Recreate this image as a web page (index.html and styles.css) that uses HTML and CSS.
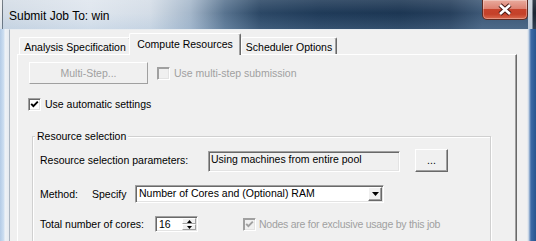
FILE: index.html
```html
<!DOCTYPE html>
<html>
<head>
<title>Submit Job To: win</title>
<meta charset='utf-8'/>
<link rel="stylesheet" href="styles.css">
</head>
<body>
<div class='window'>
	<div class='titlebar'>
		<span class='title'>Submit Job To: win</span>
		<a class='close' href='#'>
			<svg width="16" height="13" viewBox="0 0 16 13">
				<path d="M3 2 L13 11 M13 2 L3 11" stroke="#4a1a14" stroke-width="4.6"/>
				<path d="M3 2 L13 11 M13 2 L3 11" stroke="#fff" stroke-width="2.6"/>
			</svg>
		</a>
	</div>
	<div class='frame'>
		<div class='edge-left'></div>
		<div class='client'>
			<div class='tabs'>
				<div class='tab tab-analysis'>Analysis Specification</div>
				<div class='tab tab-compute active'>Compute Resources</div>
				<div class='tab tab-scheduler'>Scheduler Options</div>
			</div>
			<div class='panel'>
				<div class='multi'>
					<a class='btn disabled multi-step' href='#'>Multi-Step...</a>
					<label class='check disabled'><span class='box'></span>Use multi-step submission</label>
				</div>
				<label class='check auto'>
					<span class='box'><svg width="9" height="9" viewBox="0 0 9 9"><path d="M1.2 3.8 L3.4 6.2 L7.8 1.6" stroke="#000" stroke-width="1.9" fill="none"/></svg></span>
					Use automatic settings
				</label>
				<fieldset class='group'>
					<legend>Resource selection</legend>
					<div class='row params'>
						<span class='label'>Resource selection parameters:</span>
						<div class='field'>Using machines from entire pool</div>
						<a class='btn dots' href='#'>...</a>
					</div>
					<div class='row method'>
						<span class='m-label'>Method:</span>
						<span class='m-spec'>Specify</span>
						<div class='combo'>
							<span class='combo-text'>Number of Cores and (Optional) RAM</span>
							<span class='drop'><svg width="7" height="4" viewBox="0 0 7 4"><path d="M0 0 H7 L3.5 4 Z" fill="#000"/></svg></span>
						</div>
					</div>
					<div class='row cores'>
						<span class='label'>Total number of cores:</span>
						<div class='spin'>
							<span class='spin-val'>16</span>
							<span class='spin-btns'>
								<span class='spin-btn'><svg width="5" height="3" viewBox="0 0 5 3"><path d="M0 3 H5 L2.5 0 Z" fill="#000"/></svg></span>
								<span class='spin-btn'><svg width="5" height="3" viewBox="0 0 5 3"><path d="M0 0 H5 L2.5 3 Z" fill="#000"/></svg></span>
							</span>
						</div>
						<label class='check disabled exclusive'>
							<span class='box'><svg width="9" height="9" viewBox="0 0 9 9"><path d="M1.2 3.8 L3.4 6.2 L7.8 1.6" stroke="#a0a0a0" stroke-width="1.9" fill="none"/></svg></span>
							Nodes are for exclusive usage by this job
						</label>
					</div>
				</fieldset>
			</div>
		</div>
		<div class='edge-right'></div>
	</div>
</div>
</body>
</html>
```

FILE: styles.css
```css
* {
	box-sizing: border-box;
}
body {
	margin: 0;
	background: #f0f0f0;
	color: #000;
	font-family: "Liberation Sans", Arial, sans-serif;
	font-size: 10.5px;
	line-height: 13px;
}
a {
	color: inherit;
	text-decoration: none;
}
.window {
	width: 536px;
	height: 241px;
	overflow: hidden;
	display: flex;
	flex-direction: column;
}
/* title bar */
.titlebar {
	height: 29px;
	flex: none;
	display: flex;
	align-items: flex-start;
	padding-left: 9px;
	background:
		linear-gradient(to bottom, rgba(255,255,255,0.12), rgba(255,255,255,0) 45%, rgba(140,175,210,0.2)),
		linear-gradient(to right, #eceef0 0, #eceef0 2px, #66707a 2px, #66707a 3px, #d3dce6 3px, #dfe6ee 90px, #d4dde7 150px, #a6b8cb 190px, #58738f 225px, #2b4765 260px, #1f3a58 320px, #1c3653 400px, #263f5c 450px, #3d5876 482px, #3d5876 528px, #c9d2dc 528px, #c9d2dc 532px, #1a2533 533px);
}
.title {
	font-size: 12px;
	line-height: 14px;
	padding-top: 9px;
}
.close {
	margin-left: auto;
	margin-right: 8px;
	width: 46px;
	height: 20px;
	display: flex;
	align-items: center;
	justify-content: center;
	border: 1px solid #5e2a22;
	border-top: 0;
	border-radius: 0 0 5px 5px;
	background: linear-gradient(to bottom, #e9ab9d 0, #dd8272 45%, #c7432c 50%, #c4412a 75%, #da6a4e 100%);
	box-shadow: inset 0 0 0 1px rgba(255,255,255,0.3);
}
/* frame */
.frame {
	flex: 1;
	display: flex;
}
.edge-left {
	width: 9px;
	background: linear-gradient(to right, #b3cbe6 0, #cfe0f2 4px, #eef2f6 5px, #e6ebf1 9px);
}
.edge-right {
	width: 9px;
	background: linear-gradient(to right, #e4e9ef 0, #e4e9ef 1px, #a9c0db 2px, #3d6aa6 4px, #27558f 9px);
}
.client {
	flex: 1;
	background: #f0f0f0;
	border-left: 1px solid #aab5c1;
	border-top: 1px solid #e8ecf0;
	padding: 3px 0 0 7px;
}
/* tabs */
.tabs {
	display: flex;
	align-items: flex-end;
	height: 21px;
	padding-left: 2px;
}
.tab {
	height: 17px;
	padding-top: 3px;
	text-align: center;
	white-space: nowrap;
	background: #f0f0f0;
	border: 1px solid #fff;
	border-right-color: #696969;
	border-bottom: 0;
	border-radius: 2px 2px 0 0;
	box-shadow: inset -1px 0 #a0a0a0;
}
.tab-analysis {
	width: 112px;
}
.tab-compute {
	width: 112px;
}
.tab-scheduler {
	width: 96px;
}
.tab.active {
	height: 22px;
	padding-top: 4px;
	margin: 0 0 -1px -2px;
	position: relative;
	z-index: 1;
}
.panel {
	width: 500px;
	height: 220px;
	border-top: 1px solid #fff;
	border-left: 1px solid #fff;
	border-right: 1px solid #696969;
	box-shadow: inset -1px 0 #a0a0a0;
	padding: 7px 0 0 11px;
}
/* controls */
.btn {
	display: flex;
	align-items: center;
	justify-content: center;
	border: 1px solid;
	border-color: #fff #696969 #696969 #fff;
	box-shadow: inset -1px -1px #a0a0a0;
	background: #f0f0f0;
}
.btn.disabled {
	color: #a0a0a0;
	border-color: #fff #a0a0a0 #a0a0a0 #fff;
	box-shadow: none;
}
.multi {
	display: flex;
	align-items: center;
	height: 22px;
}
.multi-step {
	width: 119px;
	height: 22px;
}
.multi .check {
	margin-left: 9px;
}
.check {
	display: flex;
	align-items: center;
	gap: 4px;
	white-space: nowrap;
}
.check.disabled {
	color: #a0a0a0;
}
.box {
	width: 13px;
	height: 13px;
	flex: none;
	display: flex;
	align-items: center;
	justify-content: center;
	border: 1px solid;
	border-color: #a0a0a0 #fff #fff #a0a0a0;
	box-shadow: inset 1px 1px #696969, inset -1px -1px #e3e3e3;
	background: #fff;
}
.check.disabled .box {
	background: #f0f0f0;
	box-shadow: inset 1px 1px #a0a0a0, inset -1px -1px #e3e3e3;
}
.auto {
	margin: 14px 0 0 -1px;
	height: 13px;
}
/* group box */
.group {
	margin: 19px 0 0 3px;
	width: 459px;
	min-width: 0;
	padding: 6px 0 30px 7px;
	border: 1px solid #d0d0d0;
	box-shadow: inset 1px 1px #fff, 1px 1px #fff;
}
.group legend {
	padding: 0 2px;
	margin-left: -5px;
	line-height: 13px;
	background: #f0f0f0;
}
.row {
	display: flex;
	align-items: center;
	white-space: nowrap;
}
.params {
	height: 23px;
}
.params .label {
	width: 168px;
}
.field {
	width: 192px;
	height: 21px;
	align-self: flex-end;
	border: 1px solid;
	border-color: #a0a0a0 #fff #fff #a0a0a0;
	box-shadow: inset 1px 1px #696969, inset -1px -1px #e3e3e3;
	background: #f0f0f0;
	padding: 1px 2px 0;
}
.dots {
	width: 33px;
	height: 23px;
	margin-left: 15px;
}
.method {
	height: 18px;
	margin-top: 13px;
}
.m-label {
	width: 52px;
}
.m-spec {
	width: 43px;
}
.combo,
.spin {
	display: flex;
	border: 1px solid;
	border-color: #a0a0a0 #fff #fff #a0a0a0;
	box-shadow: inset 1px 1px #696969, inset -1px -1px #e3e3e3;
	background: #fff;
	padding: 1px;
}
.combo {
	width: 249px;
	height: 18px;
}
.combo-text {
	flex: 1;
	padding-left: 2px;
	line-height: 12px;
}
.drop {
	width: 14px;
	height: 14px;
	display: flex;
	align-items: center;
	justify-content: center;
	background: #f0f0f0;
	border: 1px solid;
	border-color: #fff #696969 #696969 #fff;
	box-shadow: inset -1px -1px #a0a0a0;
}
.cores {
	height: 16px;
	margin-top: 13px;
}
.cores .label {
	width: 115px;
}
.spin {
	width: 43px;
	height: 16px;
}
.spin-val {
	flex: 1;
	padding-left: 2px;
	line-height: 12px;
}
.spin-btns {
	width: 14px;
	display: flex;
	flex-direction: column;
}
.spin-btn {
	flex: 1;
	display: flex;
	align-items: center;
	justify-content: center;
	background: #f0f0f0;
	border: 1px solid;
	border-color: #fff #a0a0a0 #a0a0a0 #fff;
}
.cores .check {
	margin-left: 45px;
	gap: 3px;
}
.exclusive {
	letter-spacing: -0.25px;
}
```
